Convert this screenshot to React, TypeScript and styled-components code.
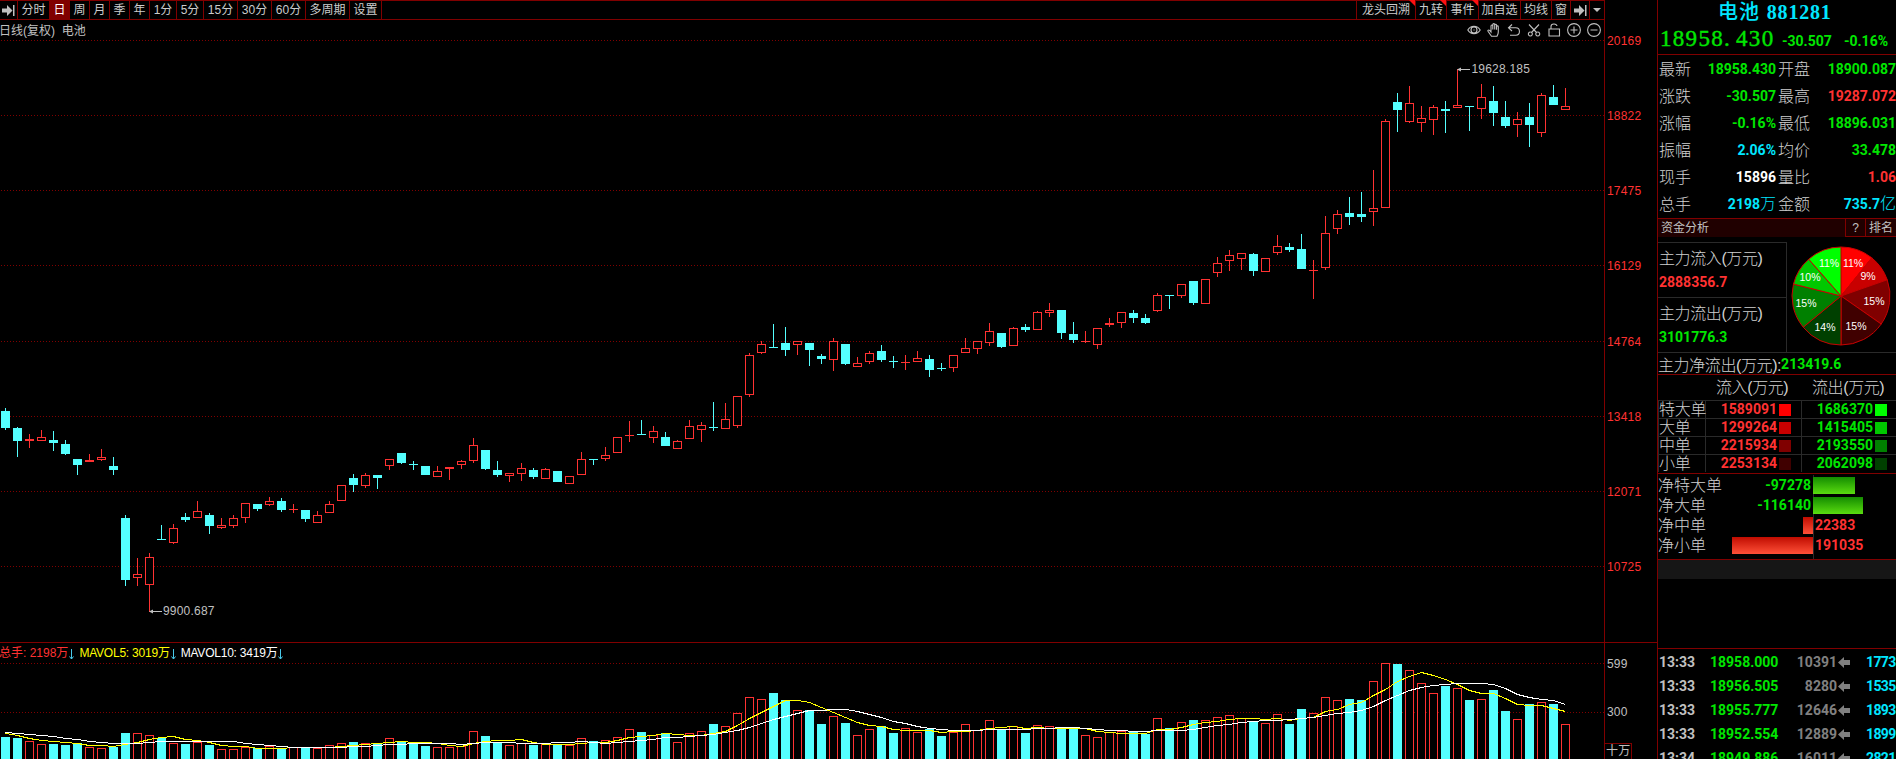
import React from 'react';
import styled, { createGlobalStyle } from 'styled-components';

const colors = {
  line: '#800000',
  grid: '#2a2a2a',
  up: '#ff3232',
  down: '#54ffff',
  green: '#00e600',
  cyan: '#00e6ff',
  text: '#c0c0c0',
  label: '#d0d0d0',
  gray: '#808080',
  white: '#ffffff',
};

const uiFont = `'Liberation Sans', 'Noto Sans CJK SC', sans-serif`;

const GlobalStyle = createGlobalStyle`
  * {
    box-sizing: border-box;
  }

  body {
    margin: 0;
    background: #000;
    font-family: ${uiFont};
    font-size: 12px;
    color: ${colors.text};
  }

  svg {
    display: block;
  }
`;

const Screen = styled.div`
  display: flex;
  width: 1896px;
  height: 759px;
  overflow: hidden;
  background: #000;
  white-space: nowrap;
`;

const Main = styled.main`
  display: flex;
  flex-direction: column;
  width: 1657px;
  height: 759px;
`;

/* toolbar */

const Toolbar = styled.nav`
  display: flex;
  justify-content: space-between;
  width: 1605px;
  height: 20px;
  border: 1px solid ${colors.line};
  border-left: none;
`;

const ToolGroup = styled.div`
  display: flex;
`;

const ToolItem = styled.div<{ $width: number; $active?: boolean; $side?: 'left' | 'right' }>`
  position: relative;
  display: flex;
  align-items: center;
  justify-content: center;
  width: ${props => props.$width}px;
  height: 18px;
  line-height: 17px;
  border-${props => props.$side || 'right'}: 1px solid ${colors.line};
  background: ${props => (props.$active ? colors.line : 'transparent')};
  color: ${props => (props.$active ? colors.white : '#cccccc')};
`;

const Corner = styled.i`
  position: absolute;
  top: -1px;
  right: 0;
  border-top: 6px solid #ff1010;
  border-left: 6px solid transparent;
`;

/* price chart */

const Pane = styled.section<{ $height: number }>`
  display: flex;
  height: ${props => props.$height}px;
`;

const Plot = styled.div`
  width: 1605px;
  border-right: 1px solid ${colors.line};
`;

const PlotHeader = styled.div`
  display: flex;
  align-items: center;
  justify-content: space-between;
  height: 20px;
  padding-right: 3px;
`;

const PlotTitle = styled.span`
  margin: -2px 0 0 -1px;
`;

const ChartIcons = styled.div`
  display: flex;
  gap: 6px;
`;

const PriceAxis = styled.div`
  display: flex;
  flex-direction: column;
  justify-content: space-between;
  height: 542px;
  margin-top: 13px;
  padding-left: 2px;
  line-height: 16px;
  letter-spacing: 0.2px;
  color: ${colors.up};
`;

const VolumePane = styled(Pane)`
  border-top: 1px solid ${colors.line};
`;

const VolumeHeader = styled.div`
  display: flex;
  gap: 5px;
  height: 20px;
  margin-left: -1px;
  line-height: 20px;
`;

const VolumeLabel = styled.span<{ $color: string; $tight?: boolean }>`
  display: flex;
  align-items: center;
  color: ${props => props.$color};
  letter-spacing: ${props => (props.$tight ? '-0.22px' : '0')};

  svg {
    margin: 2px 0 0 1px;
  }
`;

const VolumeAxis = styled.div`
  display: flex;
  flex-direction: column;
  align-items: flex-start;
  padding-top: 13px;
  line-height: 16px;
  letter-spacing: 0.2px;
`;

const VolumeTick = styled.span`
  height: 49px;
  padding-left: 2px;
`;

const VolumeUnit = styled.span`
  margin-top: -8px;
  padding: 0 1px;
  line-height: 15px;
  border: 1px solid ${colors.line};
  border-left: none;
  border-bottom: none;
`;

/* side panel */

const Panel = styled.aside`
  width: 239px;
  height: 759px;
  border-left: 1px solid ${colors.line};
  overflow: hidden;
`;

const Num = styled.span<{ $color?: string }>`
  color: ${props => props.$color || 'inherit'};
  font-family: Roboto, 'Noto Sans CJK SC', sans-serif;
  font-size: 14px;
  font-weight: 700;

  em {
    font-family: 'Noto Sans CJK SC', sans-serif;
    font-size: 16px;
    font-weight: 300;
    font-style: normal;
    line-height: 1;
  }
`;

const Summary = styled.header`
  height: 55px;
  border-bottom: 1px solid ${colors.line};
`;

const StockTitle = styled.h1`
  margin: 0;
  padding-left: 60px;
  height: 24px;
  line-height: 24px;
  color: ${colors.cyan};
  font-family: 'Liberation Serif', 'Noto Sans CJK SC', serif;
  font-size: 20px;
  font-weight: 700;
  letter-spacing: 0.8px;

  span {
    margin-right: 1px;
    font-weight: 500;
    letter-spacing: 1px;
  }
`;

const PriceLine = styled.div`
  display: flex;
  align-items: baseline;
  height: 30px;
  line-height: 30px;
  padding-left: 2px;
  color: ${colors.green};
`;

const BigPrice = styled.span`
  width: 122px;
  font-family: 'Liberation Serif', serif;
  font-size: 23px;
  letter-spacing: 1.3px;
  -webkit-text-stroke: 0.4px ${colors.green};

  span {
    margin-left: 5px;
  }
`;

const Change = styled(Num)`
  width: 62px;
`;

const Quotes = styled.div`
  height: 163px;
  padding-top: 1px;
`;

const QuoteRow = styled.div`
  display: grid;
  grid-template-columns: 34px 83px 37px 83px;
  height: 27px;
  line-height: 27px;
  padding-left: 1px;

  ${Num} {
    text-align: right;
  }
`;

const Label = styled.span`
  color: ${colors.label};
  font-size: 16px;
  font-weight: 300;
`;

const FundLabel = styled(Label)`
  letter-spacing: -0.4px;
`;

const QuoteLabel = styled(Label)<{ $indent?: boolean }>`
  padding-left: ${props => (props.$indent ? 2 : 0)}px;
`;

const FundHeader = styled.div`
  display: flex;
  height: 19px;
  line-height: 18px;
  border-top: 1px solid ${colors.line};
  background: #200000;
`;

const FundTitle = styled.span`
  flex: 1;
  padding-left: 3px;
`;

const FundButton = styled.span<{ $width: number }>`
  width: ${props => props.$width}px;
  text-align: center;
  border-left: 1px solid ${colors.line};
  border-bottom: 1px solid ${colors.line};
`;

const FundOverview = styled.div`
  display: flex;
  height: 116px;
  border-bottom: 1px solid ${colors.grid};
`;

const FundBoxes = styled.div`
  width: 129px;
  margin-top: 5px;
  border-top: 1px solid ${colors.grid};
  border-right: 1px solid ${colors.grid};
`;

const FundBox = styled.div`
  display: flex;
  flex-direction: column;
  height: 55px;
  padding: 3px 0 0 1px;
  border-bottom: 1px solid ${colors.grid};
  line-height: 25px;

  & + & {
    border-bottom: none;
  }

  ${Num} {
    line-height: 22px;
  }
`;

const PieArea = styled.div`
  padding: 9px 0 0 4px;
`;

const PieText = styled.text`
  fill: #fff;
  font-family: 'Liberation Sans', sans-serif;
  font-size: 10.5px;
  text-anchor: middle;
`;

const NetLine = styled.div`
  display: flex;
  align-items: center;
  height: 22px;
  border-bottom: 1px solid ${colors.line};
`;

const OrderHead = styled.div`
  display: flex;
  height: 25px;
  line-height: 26px;
  padding-left: 58px;
  gap: 24px;

  span {
    width: 72px;
  }
`;

const OrderRow = styled.div`
  display: grid;
  grid-template-columns: 47px 96px 94px;
  height: 18px;
  border-top: 1px solid ${colors.grid};
  border-left: 1px solid ${colors.grid};
  line-height: 17px;
`;

const OrderName = styled(Label)`
  border-right: 1px solid ${colors.grid};
  letter-spacing: -0.3px;
`;

const OrderCell = styled.div<{ $last?: boolean }>`
  display: flex;
  align-items: center;
  justify-content: flex-end;
  gap: 2px;
  padding-right: ${props => (props.$last ? 9 : 10)}px;
  border-right: ${props => (props.$last ? 'none' : `1px solid ${colors.grid}`)};
`;

const Swatch = styled.i<{ $color: string }>`
  width: 12px;
  height: 12px;
  background: ${props => props.$color};
`;

const NetSection = styled.div`
  height: 87px;
  margin-top: 1px;
  padding-top: 1px;
  border-top: 1px solid ${colors.line};
  border-bottom: 1px solid ${colors.line};
`;

const NetRow = styled.div`
  display: grid;
  grid-template-columns: 155px 83px;
  height: 20px;
  line-height: 21px;

  &:last-child {
    height: 24px;
  }
`;

const NetLeft = styled.div`
  display: flex;
  justify-content: space-between;
`;

const NetRight = styled.div`
  display: flex;
  border-left: 1px solid ${colors.grid};

  ${Num} {
    padding-left: 1px;
  }
`;

const NetBar = styled.i<{ $up: boolean }>`
  height: 17px;
  margin-top: 2px;
  margin-left: ${props => (props.$up ? 0 : -1)}px;
  background: ${props =>
    props.$up
      ? 'linear-gradient(#c00c00, #ff5038)'
      : 'linear-gradient(#148c00, #5adc10)'};
`;

const NetValue = styled(Num)`
  margin-right: 2px;
`;

const Band = styled.div`
  height: 19px;
  background: #161616;
`;

const Trades = styled.div`
  height: 111px;
  margin-top: 69px;
  border-top: 1px solid ${colors.line};
  padding-top: 1px;
`;

const TradeRow = styled.div`
  display: grid;
  grid-template-columns: 51px 80px 47px 29px 30px;
  align-items: center;
  height: 24px;
  padding-left: 1px;

  ${Num}:nth-child(3) {
    text-align: right;
  }

  svg {
    margin-left: 1px;
  }
`;

const TradeCount = styled(Num)`
  letter-spacing: -0.6px;
`;

// [up, high, body top, body bottom, low, volume top]
type Bar = [number, number, number, number, number, number];

const bars: Bar[] = [
  [0, 408, 411, 428, 430, 737], [0, 427, 428, 441, 457, 738], [1, 434, 439, 441, 448, 741],
  [1, 430, 437, 441, 441, 744], [0, 431, 440, 443, 451, 744], [0, 440, 444, 454, 455, 745],
  [0, 459, 459, 465, 475, 743], [1, 454, 460, 462, 462, 747], [1, 449, 457, 460, 461, 748],
  [0, 457, 466, 470, 475, 747], [0, 515, 518, 580, 586, 733], [1, 558, 574, 578, 586, 733],
  [1, 553, 557, 585, 612, 735], [0, 525, 539, 540, 540, 738], [1, 524, 528, 543, 544, 743],
  [0, 513, 517, 520, 522, 744], [1, 501, 511, 518, 518, 742], [0, 513, 515, 526, 534, 745],
  [1, 518, 525, 528, 529, 749], [1, 515, 518, 526, 528, 749], [1, 503, 503, 518, 523, 747],
  [0, 504, 504, 509, 511, 748], [1, 497, 501, 505, 506, 746], [0, 498, 501, 510, 512, 748],
  [1, 504, 509, 510, 513, 747], [0, 510, 510, 519, 522, 747], [1, 511, 515, 523, 523, 748],
  [1, 501, 504, 513, 513, 745], [1, 485, 485, 501, 501, 743], [0, 474, 478, 485, 492, 742],
  [1, 473, 475, 486, 488, 743], [0, 475, 475, 478, 489, 743], [1, 459, 459, 466, 470, 738],
  [0, 453, 453, 463, 464, 741], [0, 461, 464, 465, 470, 743], [0, 466, 466, 475, 475, 746],
  [1, 466, 471, 477, 477, 747], [1, 467, 467, 469, 480, 747], [1, 460, 461, 465, 469, 746],
  [1, 438, 445, 461, 463, 731], [0, 450, 450, 469, 470, 736], [0, 461, 470, 475, 477, 742],
  [1, 473, 473, 476, 482, 745], [1, 463, 468, 474, 481, 743], [0, 468, 470, 477, 479, 745],
  [1, 468, 469, 479, 479, 744], [0, 471, 471, 482, 482, 744], [1, 476, 476, 484, 484, 745],
  [1, 452, 459, 475, 475, 738], [0, 459, 459, 460, 465, 741], [1, 447, 455, 459, 461, 740],
  [1, 437, 437, 453, 453, 737], [1, 421, 435, 436, 442, 729], [0, 420, 434, 435, 435, 732],
  [1, 426, 431, 438, 443, 735], [0, 432, 437, 446, 446, 733], [1, 440, 441, 449, 449, 742],
  [1, 420, 426, 439, 439, 733], [1, 422, 425, 430, 442, 731], [0, 402, 427, 428, 431, 724],
  [1, 403, 419, 429, 429, 726], [1, 396, 396, 426, 428, 713], [1, 353, 355, 395, 397, 697],
  [1, 341, 344, 353, 354, 699], [0, 324, 347, 348, 348, 693], [0, 327, 343, 350, 356, 700],
  [1, 341, 341, 345, 355, 710], [0, 343, 343, 350, 366, 710], [0, 354, 356, 359, 364, 724],
  [1, 338, 341, 360, 371, 716], [0, 344, 344, 364, 365, 723], [1, 357, 363, 367, 367, 735],
  [1, 351, 353, 362, 364, 729], [0, 345, 351, 360, 362, 726], [0, 356, 361, 362, 368, 733],
  [1, 355, 362, 363, 370, 728], [1, 351, 358, 362, 362, 732], [0, 355, 359, 370, 377, 729],
  [0, 363, 368, 369, 371, 736], [1, 355, 355, 368, 372, 732], [1, 338, 348, 353, 353, 724],
  [1, 341, 341, 349, 354, 730], [1, 323, 331, 343, 346, 720], [0, 333, 333, 347, 348, 729],
  [1, 327, 328, 346, 346, 726], [0, 324, 327, 330, 332, 733], [1, 311, 312, 330, 330, 725],
  [1, 303, 310, 313, 317, 726], [0, 310, 310, 333, 339, 728], [0, 322, 334, 340, 343, 728],
  [1, 331, 341, 342, 343, 735], [1, 328, 328, 345, 349, 737], [1, 318, 323, 325, 327, 732],
  [1, 312, 312, 323, 328, 731], [0, 310, 313, 318, 323, 732], [0, 314, 318, 323, 324, 734],
  [1, 293, 295, 311, 312, 718], [0, 295, 295, 296, 309, 728], [1, 284, 284, 296, 298, 722],
  [0, 281, 281, 303, 305, 720], [1, 279, 279, 304, 304, 720], [1, 257, 263, 273, 277, 717],
  [1, 250, 255, 261, 271, 715], [1, 253, 253, 259, 270, 718], [0, 253, 254, 271, 276, 721],
  [1, 258, 258, 272, 272, 723], [1, 235, 246, 253, 255, 714], [0, 243, 247, 250, 252, 724],
  [0, 234, 249, 269, 269, 709], [1, 260, 270, 271, 299, 713], [1, 216, 233, 268, 270, 697],
  [1, 210, 214, 229, 234, 700], [0, 197, 213, 217, 225, 699], [0, 192, 214, 217, 222, 700],
  [1, 170, 208, 212, 226, 681], [1, 119, 121, 208, 208, 663], [0, 93, 102, 110, 132, 664],
  [1, 86, 103, 122, 123, 670], [1, 106, 118, 123, 132, 683], [1, 105, 107, 120, 135, 693],
  [0, 101, 109, 111, 133, 686], [1, 69, 105, 108, 108, 688], [0, 106, 106, 107, 131, 700],
  [1, 84, 97, 109, 119, 699], [0, 86, 101, 113, 126, 690], [0, 101, 117, 126, 128, 711],
  [1, 112, 119, 125, 137, 719], [0, 103, 117, 125, 147, 704], [1, 93, 95, 133, 137, 702],
  [0, 85, 97, 105, 105, 704], [1, 88, 106, 110, 110, 724],
];

const priceLines = [40, 115, 190, 265, 341, 416, 491, 566];
const priceTicks = ['20169', '18822', '17475', '16129', '14764', '13418', '12071', '10725'];

const average = (count: number, head: number[]) =>
  bars
    .map((_, i) => {
      const y =
        i < head.length
          ? head[i]
          : bars.slice(i - count + 1, i + 1).reduce((sum, b) => sum + b[5], 0) / count;
      return `${5.5 + i * 12},${Math.round(y) + 0.5}`;
    })
    .join(' ');

const ma5 = average(5, [733, 735, 738, 740]);
const ma10 = average(10, [732, 733, 734, 735, 736, 738, 739, 741, 742]);

const GridLines = ({ rows }: { rows: number[] }) => (
  <>
    {rows.map(y => (
      <line key={y} x1="1" x2="1604" y1={y + 0.5} y2={y + 0.5} stroke={colors.line} strokeDasharray="1 2" />
    ))}
  </>
);

const Candle = ({ bar, index }: { bar: Bar; index: number }) => {
  const [up, high, top, bottom, low] = bar;
  const x = 1 + index * 12;
  const color = up ? colors.up : colors.down;
  const hollow = up && bottom - top > 2;

  return (
    <g>
      {top > high && <rect x={x + 4} y={high} width="1" height={top - high} fill={color} />}
      {low > bottom && <rect x={x + 4} y={bottom} width="1" height={low - bottom} fill={color} />}
      {hollow ? (
        <rect x={x + 0.5} y={top + 0.5} width="8" height={bottom - top - 1} fill="#000" stroke={color} />
      ) : (
        <rect x={x} y={top} width="9" height={bottom - top} fill={color} />
      )}
    </g>
  );
};

const PriceChart = () => (
  <svg width="1604" height="602" viewBox="0 40 1604 602">
    <g shapeRendering="crispEdges">
      <GridLines rows={priceLines} />
      {bars.map((bar, i) => (
        <Candle key={i} bar={bar} index={i} />
      ))}
    </g>
    <g fill={colors.text} fontSize="12" letterSpacing="0.2">
      <path d="M1457 69.500l4-2v1.500h9v1h-9v1.500z" />
      <text x="1471.5" y="73">19628.185</text>
      <path d="M149 611.500l4-2v1.500h9v1h-9v1.500z" />
      <text x="163" y="615">9900.687</text>
    </g>
  </svg>
);

const VolumeChart = () => (
  <svg width="1604" height="96" viewBox="0 663 1604 96" shapeRendering="crispEdges">
    <GridLines rows={[663, 712]} />
    {bars.map(([up, , , , , top], i) =>
      up ? (
        <rect key={i} x={1.5 + i * 12} y={top + 0.5} width="8" height="110" fill="#000" stroke={colors.up} />
      ) : (
        <rect key={i} x={1 + i * 12} y={top} width="9" height="110" fill={colors.down} />
      )
    )}
    <polyline points={ma5} fill="none" stroke="#ffff00" />
    <polyline points={ma10} fill="none" stroke="#ffffff" />
  </svg>
);

const SkipIcon = () => (
  <svg width="13" height="11" viewBox="0 0 13 11" fill={colors.text}>
    <path d="M0 3.600h5V0l5.500 5.500L5 11V7.400H0zM11 0h1.500v11H11z" />
  </svg>
);

const FallingIcon = () => (
  <svg width="5" height="11" viewBox="0 0 5 11" fill="none" stroke="#48c8e8">
    <path d="M2.500 0v10M.5 7.500l2 2.500 2-2.500" />
  </svg>
);

const iconPaths = [
  'M.8 7C3.8 2 10.2 2 13.2 7 10.2 12 3.8 12 .8 7zM7 4a3 3 0 1 0 0 6 3 3 0 0 0 0-6zM7 6.4v1.2',
  'M4.5 13.3L1 8.3c-.6-1 .8-1.8 1.6-.8L4 9V3c0-1.3 1.8-1.3 1.8 0v3.5V1.6c0-1.3 1.9-1.3 1.9 0v4.9V2.2c0-1.2 1.8-1.2 1.8 0v4.6V3.8c0-1.2 1.8-1.2 1.8 0V9c0 2-.6 3-1.3 4.3z',
  'M5 1.5L1.5 4.8 5 8M1.5 4.8h7.2c5 0 5 7.4 0 7.4H3',
  'M2 1.5l7.5 8M12 1.5l-7.5 8M3.3 9a2 2 0 1 0 .1 0M10.7 9a2 2 0 1 0 .1 0',
  'M2 6h10.500v7H2zM4 6V3.500C4 .2 9.500 .2 10 3',
  'M7 .6a6.400 6.400 0 1 0 0 12.800A6.400 6.400 0 0 0 7 .6zM3.500 7h7M7 3.500v7',
  'M7 .6a6.400 6.400 0 1 0 0 12.800A6.400 6.400 0 0 0 7 .6zM3.500 7h7',
];

const periods: [string, number][] = [
  ['分时', 32], ['日', 20], ['周', 20], ['月', 20], ['季', 20], ['年', 20], ['1分', 27],
  ['5分', 27], ['15分', 34], ['30分', 34], ['60分', 34], ['多周期', 44], ['设置', 32],
];

const tools: [string, number, boolean][] = [
  ['龙头回溯', 59, true], ['九转', 31, true], ['事件', 32, true],
  ['加自选', 42, false], ['均线', 31, false], ['窗', 19, false],
];

const quotes = [
  ['最新', '18958.430', colors.green, '开盘', '18900.087', colors.green],
  ['涨跌', '-30.507', colors.green, '最高', '19287.072', colors.up],
  ['涨幅', '-0.16%', colors.green, '最低', '18896.031', colors.green],
  ['振幅', '2.06%', colors.cyan, '均价', '33.478', colors.green],
  ['现手', '15896', colors.white, '量比', '1.06', colors.up],
  ['总手', '2198万', colors.cyan, '金额', '735.7亿', colors.cyan],
];

const orders = [
  { name: '特大单', inflow: 1589091, outflow: 1686370, red: '#ff0000', green: '#00ff00' },
  { name: '大单', inflow: 1299264, outflow: 1415405, red: '#c80000', green: '#00c800' },
  { name: '中单', inflow: 2215934, outflow: 2193550, red: '#800000', green: '#008000' },
  { name: '小单', inflow: 2253134, outflow: 2062098, red: '#400000', green: '#004000' },
];

const nets = [
  { name: '净特大单', value: -97278, width: 42 },
  { name: '净大单', value: -116140, width: 50 },
  { name: '净中单', value: 22383, width: 10 },
  { name: '净小单', value: 191035, width: 81 },
];

const trades = [
  ['13:33', '18958.000', '10391', '1773'],
  ['13:33', '18956.505', '8280', '1535'],
  ['13:33', '18955.777', '12646', '1893'],
  ['13:33', '18952.554', '12889', '1899'],
  ['13:34', '18949.886', '16011', '2821'],
];

// keeps the 万 / 亿 suffix in the label face
const withUnit = (value: string) => {
  const unit = value.match(/[万亿]$/);
  return unit ? <>{value.slice(0, -1)}<em>{unit[0]}</em></> : value;
};

const labelSpots = [[12, -33], [27, -20], [33, 5], [15, 30], [-16, 31], [-35, 7], [-31, -19], [-12, -33]];

const FundPie = () => {
  const slices = [
    ...orders.map(o => ({ value: o.inflow, color: o.red })),
    ...[...orders].reverse().map(o => ({ value: o.outflow, color: o.green })),
  ];
  const total = slices.reduce((sum, s) => sum + s.value, 0);
  let angle = 0;

  return (
    <svg width="100" height="100" viewBox="-50 -50 100 100">
      {slices.map((slice, i) => {
        const start = angle;
        angle += (slice.value / total) * Math.PI * 2;
        const from = `${49 * Math.sin(start)} ${-49 * Math.cos(start)}`;
        const to = `${49 * Math.sin(angle)} ${-49 * Math.cos(angle)}`;
        return <path key={i} d={`M0 0L${from}A49 49 0 0 1 ${to}Z`} fill={slice.color} stroke="#c80000" />;
      })}
      {slices.map((slice, i) => (
        <PieText key={i} x={labelSpots[i][0]} y={labelSpots[i][1] + 4}>
          {Math.round((slice.value / total) * 100)}%
        </PieText>
      ))}
    </svg>
  );
};

const App: React.FC = () => (
  <>
    <GlobalStyle />
    <Screen>
      <Main>
        <Toolbar>
          <ToolGroup>
            <ToolItem $width={18}><SkipIcon /></ToolItem>
            {periods.map(([name, width]) => (
              <ToolItem key={name} $width={width} $active={name === '日'}>{name}</ToolItem>
            ))}
          </ToolGroup>
          <ToolGroup>
            {tools.map(([name, width, flagged]) => (
              <ToolItem key={name} $width={width} $side="left">
                {name}
                {flagged && <Corner />}
              </ToolItem>
            ))}
            <ToolItem $width={19} $side="left"><SkipIcon /></ToolItem>
            <ToolItem $width={15} $side="left">
              <svg width="8" height="4" viewBox="0 0 8 4" fill={colors.text}><path d="M0 0h8L4 4z" /></svg>
            </ToolItem>
          </ToolGroup>
        </Toolbar>

        <Pane $height={622}>
          <Plot>
            <PlotHeader>
              <PlotTitle>日线(复权)&nbsp; 电池</PlotTitle>
              <ChartIcons>
                {iconPaths.map(d => (
                  <svg key={d} width="14" height="14" viewBox="0 0 14 14" fill="none" stroke={colors.text} strokeWidth="1.1">
                    <path d={d} />
                  </svg>
                ))}
              </ChartIcons>
            </PlotHeader>
            <PriceChart />
          </Plot>
          <PriceAxis>
            {priceTicks.map(tick => <span key={tick}>{tick}</span>)}
          </PriceAxis>
        </Pane>

        <VolumePane $height={117}>
          <Plot>
            <VolumeHeader>
              <VolumeLabel $color={colors.up}>总手: 2198万<FallingIcon /></VolumeLabel>
              <VolumeLabel $color="#ffff00" $tight>MAVOL5: 3019万<FallingIcon /></VolumeLabel>
              <VolumeLabel $color="#ffffff" $tight>MAVOL10: 3419万<FallingIcon /></VolumeLabel>
            </VolumeHeader>
            <VolumeChart />
          </Plot>
          <VolumeAxis>
            <VolumeTick>599</VolumeTick>
            <VolumeTick>300</VolumeTick>
            <VolumeUnit>十万</VolumeUnit>
          </VolumeAxis>
        </VolumePane>
      </Main>

      <Panel>
        <Summary>
          <StockTitle><span>电池</span> 881281</StockTitle>
          <PriceLine>
            <BigPrice>18958.<span>430</span></BigPrice>
            <Change>-30.507</Change>
            <Num>-0.16%</Num>
          </PriceLine>
        </Summary>

        <Quotes>
          {quotes.map(([name, value, color, name2, value2, color2]) => (
            <QuoteRow key={name}>
              <QuoteLabel>{name}</QuoteLabel>
              <Num $color={color}>{withUnit(value)}</Num>
              <QuoteLabel $indent>{name2}</QuoteLabel>
              <Num $color={color2}>{withUnit(value2)}</Num>
            </QuoteRow>
          ))}
        </Quotes>

        <FundHeader>
          <FundTitle>资金分析</FundTitle>
          <FundButton $width={20}>?</FundButton>
          <FundButton $width={31}>排名</FundButton>
        </FundHeader>
        <FundOverview>
          <FundBoxes>
            <FundBox>
              <FundLabel>主力流入(万元)</FundLabel>
              <Num $color={colors.up}>2888356.7</Num>
            </FundBox>
            <FundBox>
              <FundLabel>主力流出(万元)</FundLabel>
              <Num $color={colors.green}>3101776.3</Num>
            </FundBox>
          </FundBoxes>
          <PieArea><FundPie /></PieArea>
        </FundOverview>
        <NetLine>
          <FundLabel>主力净流出(万元):</FundLabel>
          <Num $color={colors.green}>213419.6</Num>
        </NetLine>

        <OrderHead>
          <FundLabel>流入(万元)</FundLabel>
          <FundLabel>流出(万元)</FundLabel>
        </OrderHead>
        {orders.map(order => (
          <OrderRow key={order.name}>
            <OrderName>{order.name}</OrderName>
            <OrderCell>
              <Num $color={colors.up}>{order.inflow}</Num>
              <Swatch $color={order.red} />
            </OrderCell>
            <OrderCell $last>
              <Num $color={colors.green}>{order.outflow}</Num>
              <Swatch $color={order.green} />
            </OrderCell>
          </OrderRow>
        ))}

        <NetSection>
          {nets.map(net => {
            const up = net.value > 0;
            const bar = <NetBar $up={up} style={{ width: net.width }} />;
            return (
              <NetRow key={net.name}>
                <NetLeft>
                  <Label>{net.name}</Label>
                  {up ? bar : <NetValue $color={colors.green}>{net.value}</NetValue>}
                </NetLeft>
                <NetRight>{up ? <Num $color={colors.up}>{net.value}</Num> : bar}</NetRight>
              </NetRow>
            );
          })}
        </NetSection>
        <Band />

        <Trades>
          {trades.map(([time, price, volume, count]) => (
            <TradeRow key={price}>
              <Num $color={colors.text}>{time}</Num>
              <Num $color={colors.green}>{price}</Num>
              <Num $color={colors.gray}>{volume}</Num>
              <svg width="12" height="11" viewBox="0 0 12 11" fill={colors.gray}>
                <path d="M0 5.500L6 0v3h6v5H6v3z" />
              </svg>
              <TradeCount $color={colors.cyan}>{count}</TradeCount>
            </TradeRow>
          ))}
        </Trades>
      </Panel>
    </Screen>
  </>
);

export default App;
